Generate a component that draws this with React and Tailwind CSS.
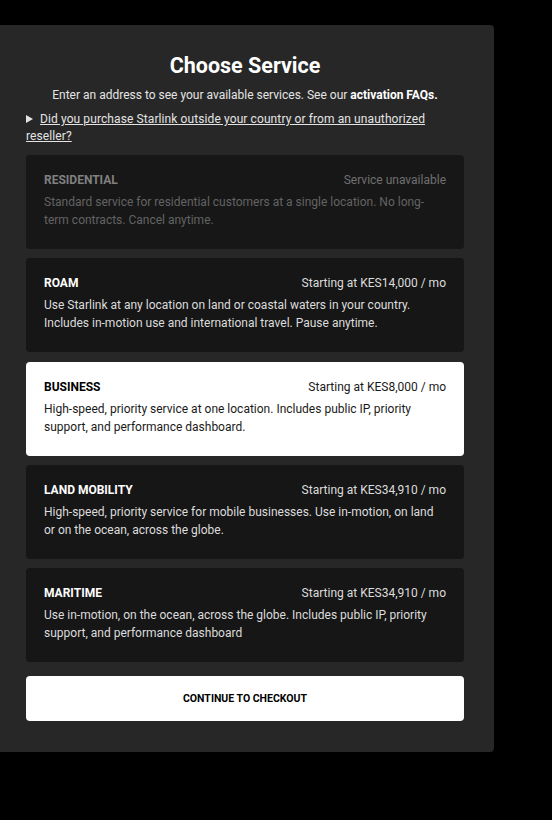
import React from 'react';

const services = [
   {
      name: 'RESIDENTIAL',
      price: 'Service unavailable',
      desc: 'Standard service for residential customers at a single location. No long-term contracts. Cancel anytime.',
      disabled: true,
   },
   {
      name: 'ROAM',
      price: 'Starting at KES14,000 / mo',
      desc: 'Use Starlink at any location on land or coastal waters in your country. Includes in-motion use and international travel. Pause anytime.',
   },
   {
      name: 'BUSINESS',
      price: 'Starting at KES8,000 / mo',
      desc: 'High-speed, priority service at one location. Includes public IP, priority support, and performance dashboard.',
      selected: true,
   },
   {
      name: 'LAND MOBILITY',
      price: 'Starting at KES34,910 / mo',
      desc: 'High-speed, priority service for mobile businesses. Use in-motion, on land or on the ocean, across the globe.',
   },
   {
      name: 'MARITIME',
      price: 'Starting at KES34,910 / mo',
      desc: 'Use in-motion, on the ocean, across the globe. Includes public IP, priority support, and performance dashboard',
   },
];

function ServiceCard({ s }) {
   let box = 'bg-[#161616] text-[#dcdcdc]';
   let head = 'text-white';
   let price = 'text-[#dcdcdc]';
   if (s.selected) {
      box = 'bg-white text-[#1a1a1a]';
      head = 'text-black';
      price = 'text-[#1a1a1a]';
   }
   if (s.disabled) {
      box = 'bg-[#171717] text-[#636363]';
      head = 'text-[#808080]';
      price = 'text-[#707070]';
   }
   return (
      <div className={`rounded-[4px] px-[18px] pt-4 pb-5 ${box}`}>
         <div className="flex justify-between items-center h-[18px]">
            <span className={`text-[12px] font-bold ${head}`}>{s.name}</span>
            <span className={`text-[12px] ${price}`}>{s.price}</span>
         </div>
         <p className="mt-1 text-[12px] leading-[18px] pr-1">{s.desc}</p>
      </div>
   );
}

export default function App() {
   return (
      <div className="min-h-screen w-full bg-black pt-[25px] font-['Roboto',sans-serif]">
         <div className="w-[494px] bg-[#272727] rounded-r-[4px] pl-[26px] pr-[30px] pt-[27px] pb-[31px]">
            <h1 className="text-center text-white text-[21.5px] font-bold leading-[28px]">Choose Service</h1>
            <p className="mt-[6px] text-center text-[12px] leading-[18px] text-[#e4e4e4]">
               Enter an address to see your available services. See our <span className="font-bold text-white">activation FAQs.</span>
            </p>
            <p className="mt-[7px] text-[12px] leading-[17px] text-[#e4e4e4] tracking-[0.1px]">
               <span className="inline-block w-0 h-0 mr-[7px] border-l-[7px] border-l-[#e4e4e4] border-y-[4px] border-y-transparent"></span>
               <span className="underline">Did you purchase Starlink outside your country or from an unauthorized reseller?</span>
            </p>
            <div className="mt-[10px] flex flex-col gap-[9.25px]">
               {services.map((s) => (
                  <ServiceCard key={s.name} s={s} />
               ))}
            </div>
            <button className="mt-[14px] w-full h-[45px] bg-white rounded-[4px] text-[10.5px] font-bold text-black">
               CONTINUE TO CHECKOUT
            </button>
         </div>
      </div>
   );
}
